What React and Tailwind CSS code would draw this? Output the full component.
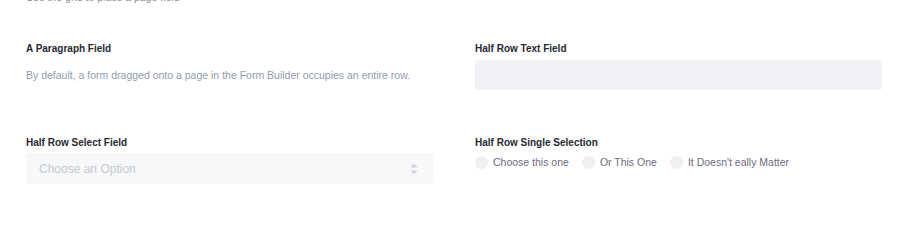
function Label({ children }) {
  return <p className="text-[10px] font-semibold leading-4 text-[#272833]">{children}</p>
}

function Radio({ label }) {
  return (
    <label className="flex items-center gap-[5px]">
      <span className="h-[13px] w-[13px] shrink-0 rounded-full bg-[#eef0f4]" />
      <span className="text-[10.5px] text-[#6b6c7e]">{label}</span>
    </label>
  )
}

export default function App() {
  return (
    <div className="h-[217px] overflow-hidden bg-white font-['Liberation_Sans',sans-serif]">
      <p className="-mt-[11px] pl-[26px] text-[10.5px] leading-4 text-[#8b8d9c]">
        Use the grid to place a page field
      </p>

      <div className="grid grid-cols-2 gap-x-[42px] pl-[26px] pr-[29px] pt-[36px]">
        <div className="flex flex-col">
          <Label>A Paragraph Field</Label>
          <p className="mt-[10px] text-[10.5px] leading-4 text-[#8f9db1]">
            By default, a form dragged onto a page in the Form Builder occupies an entire row.
          </p>
        </div>
        <div className="flex flex-col">
          <Label>Half Row Text Field</Label>
          <div className="mt-[3px] h-[30px] rounded-[3px] bg-[#f1f2f5]" />
        </div>

        <div className="mt-[45px] flex flex-col">
          <Label>Half Row Select Field</Label>
          <div className="mt-[2px] flex h-[31px] items-center justify-between rounded-[3px] bg-[#f7f8f9] pl-[13px] pr-[15px]">
            <span className="text-[12px] text-[#c6c8ce]">Choose an Option</span>
            <svg width="8" height="12" viewBox="0 0 8 12" className="text-[#d0d2d8]">
              <path d="M4 0.5 L7.5 4.5 H0.5 Z" fill="currentColor" />
              <path d="M4 11.5 L7.5 7.5 H0.5 Z" fill="currentColor" />
            </svg>
          </div>
        </div>
        <div className="mt-[45px] flex flex-col">
          <Label>Half Row Single Selection</Label>
          <div className="mt-[4px] flex items-center gap-[13px]">
            <Radio label="Choose this one" />
            <Radio label="Or This One" />
            <Radio label="It Doesn't eally Matter" />
          </div>
        </div>
      </div>
    </div>
  )
}
